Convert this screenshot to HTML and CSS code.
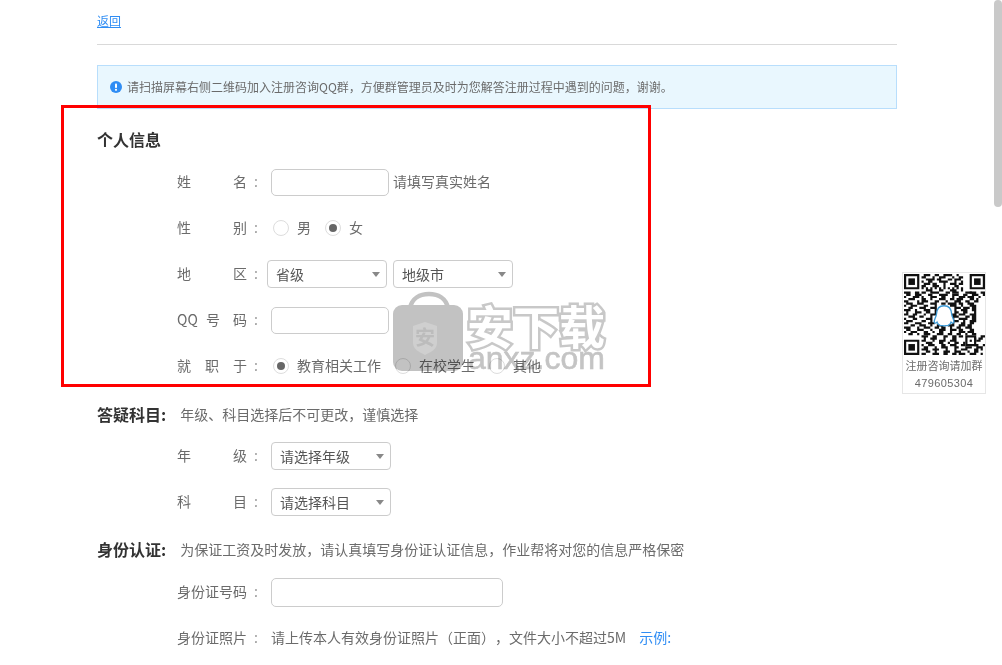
FILE: index.html
```html
<!DOCTYPE html>
<html lang="zh-CN">
<head>
<meta charset="utf-8">
<title>注册</title>
<link rel="stylesheet" href="styles.css">
</head>
<body>
<main class="page">
  <header class="top"><a class="back" href="#">返回</a></header>
  <div class="alert">
    <svg class="alert-icon" viewBox="0 0 12 12" width="12" height="12"><circle cx="6" cy="6" r="6" fill="#2f8df4"/><rect x="5" y="2.4" width="2" height="4.6" rx=".8" fill="#fff"/><circle cx="6" cy="8.8" r="1.1" fill="#fff"/></svg>
    <span>请扫描屏幕右侧二维码加入注册咨询QQ群，方便群管理员及时为您解答注册过程中遇到的问题，谢谢。</span>
  </div>

  <section>
    <h2 class="head head-first">个人信息</h2>
    <div class="rows">
      <div class="row"><span class="label">姓 名</span><span class="colon">:</span><input class="input" type="text"><span class="hint">请填写真实姓名</span></div>
      <div class="row row-short"><span class="label">性 别</span><span class="colon">:</span>
        <span class="radios"><span class="radio"></span><span class="opt">男</span><span class="radio on"></span><span class="opt">女</span></span></div>
      <div class="row row-tall"><span class="label">地 区</span><span class="colon">:</span>
        <span class="selects shift"><span class="select">省级</span><span class="select">地级市</span></span></div>
      <div class="row"><span class="label">QQ 号 码</span><span class="colon">:</span><input class="input" type="text"></div>
      <div class="row"><span class="label">就 职 于</span><span class="colon">:</span>
        <span class="radios"><span class="radio on"></span><span class="opt">教育相关工作</span><span class="radio"></span><span class="opt">在校学生</span><span class="radio"></span><span class="opt">其他</span></span></div>
    </div>
  </section>

  <section>
    <h2 class="head head-second">答疑科目:<small>年级、科目选择后不可更改，谨慎选择</small></h2>
    <div class="rows rows-second">
      <div class="row"><span class="label">年 级</span><span class="colon">:</span><span class="select">请选择年级</span></div>
      <div class="row"><span class="label">科 目</span><span class="colon">:</span><span class="select">请选择科目</span></div>
    </div>
  </section>

  <section>
    <h2 class="head head-third">身份认证:<small>为保证工资及时发放，请认真填写身份证认证信息，作业帮将对您的信息严格保密</small></h2>
    <div class="rows">
      <div class="row"><span class="label">身份证号码</span><span class="colon">:</span><input class="input input-wide" type="text"></div>
      <div class="row"><span class="label">身份证照片</span><span class="colon">:</span><span class="hint-line">请上传本人有效身份证照片（正面），文件大小不超过5M</span><a class="example" href="#">示例:</a></div>
    </div>
  </section>
</main>

<div class="redbox"></div>

<div class="watermark">
  <svg class="bag" viewBox="0 0 70 80" width="70" height="80">
    <path d="M17 17C19 7 27 3 36 3S53 7 55 17" fill="none" stroke="#c2c2c2" stroke-width="4.500"/>
    <rect x="0" y="14" width="70" height="66" rx="9" fill="#c2c2c2"/>
    <path d="M20 35L32 31 44 35V52C44 58 38 61 32 64 26 61 20 58 20 52Z" fill="#cfcfcf"/>
  </svg>
  <span class="bag-char">安</span>
  <span class="wm-cn">安下载</span>
  <span class="wm-en">anxz.com</span>
</div>

<aside class="qr">
  <svg class="qr-code" viewBox="0 0 37 37" width="81" height="81">
    <g fill="none" stroke="#111">
      <path d="M.5.5h6v6h-6zM30.500.5h6v6h-6zM.5 30.500h6v6h-6zM28.500 28.500h4v4h-4z"/>
      <path d="M9 .5h3m2 0h2m2 0h4m2 0h1M8 1.500h2m3 0h1m2 0h3m3 0h1m2 0h2M10 2.500h4m1 0h2m3 0h2m1 0h3M8 3.500h1m2 0h2m3 0h4m3 0h1m2 0h1M9 4.500h3m1 0h2m3 0h1m2 0h3m1 0h2M8 5.500h2m3 0h3m2 0h1m4 0h2M8 6.500h1m1 0h1m1 0h1m1 0h1m1 0h1m1 0h1m1 0h1m1 0h1m1 0h1m1 0h1M10 7.500h3m3 0h2m3 0h3m2 0h1M8 8.500h2m2 0h4m3 0h2m1 0h3m3 0h3"/>
      <path d="M0 8.500h3m2 0h2m23 0h3m2 0h2M1 9.500h2m2 0h3m3 0h2m3 0h4m2 0h3m2 0h2m2 0h3m2 0h2M0 10.500h1m3 0h3m1 0h1m3 0h3m2 0h2m3 0h1m2 0h3m1 0h3m2 0h1M2 11.500h3m3 0h2m2 0h1m3 0h3m2 0h2m1 0h3m3 0h2m1 0h1M0 12.500h2m4 0h1m1 0h3m3 0h2m3 0h1m3 0h3m2 0h2m2 0h2M1 13.500h3m2 0h3m3 0h3m2 0h2m1 0h4m1 0h2m2 0h3M0 14.500h1m2 0h3m3 0h2m3 0h1m6 0h3m2 0h1m3 0h3M2 15.500h2m3 0h3m2 0h3m8 0h3m1 0h3m1 0h2M0 16.500h3m2 0h1m3 0h3m2 0h1m8 0h1m2 0h3m2 0h2M1 17.500h1m3 0h3m2 0h2m2 0h1m8 0h2m2 0h2m3 0h1M0 18.500h2m2 0h2m3 0h1m2 0h3m7 0h2m1 0h3m2 0h3M2 19.500h3m2 0h2m3 0h1m2 0h1m6 0h3m3 0h2m1 0h2M0 20.500h1m3 0h2m4 0h3m2 0h2m5 0h1m2 0h4m2 0h2M1 21.500h3m4 0h2m2 0h1m2 0h3m4 0h3m2 0h1m2 0h3M0 22.500h2m3 0h3m3 0h3m3 0h2m3 0h1m3 0h2m2 0h2M3 23.500h2m2 0h3m2 0h1m2 0h3m2 0h3m2 0h3m1 0h2M0 24.500h3m3 0h1m2 0h3m2 0h2m1 0h2m2 0h1m2 0h2m2 0h3M1 25.500h2m3 0h3m3 0h1m3 0h3m2 0h3m1 0h2m3 0h2M0 26.500h1m2 0h3m3 0h2m2 0h1m2 0h2m3 0h1m3 0h3m1 0h3M2 27.500h2m2 0h1m2 0h3m3 0h3m2 0h2m2 0h2m2 0h1m2 0h2"/>
      <path d="M8 28.500h3m2 0h2m3 0h2m2 0h2m1 0h2m8 0h2M9 29.500h1m2 0h3m3 0h1m3 0h2m8 0h1m1 0h2M8 30.500h2m3 0h1m2 0h3m2 0h3m9 0h2M10 31.500h3m3 0h2m2 0h1m2 0h2m2 0h1m9 0h1M8 32.500h1m2 0h3m3 0h2m2 0h3m2 0h2m4 0h2m2 0h1M9 33.500h2m3 0h1m2 0h3m3 0h2m3 0h3m2 0h3M8 34.500h3m2 0h3m3 0h1m3 0h1m2 0h3m3 0h2m1 0h1M10 35.500h2m2 0h1m3 0h3m2 0h3m3 0h1m2 0h2M8 36.500h2m3 0h3m2 0h2m2 0h2m1 0h3m2 0h3m2 0h1"/>
    </g>
    <rect x="2" y="2" width="3" height="3" fill="#111"/><rect x="32" y="2" width="3" height="3" fill="#111"/><rect x="2" y="32" width="3" height="3" fill="#111"/><rect x="30" y="30" width="1" height="1" fill="#111"/>
    <path d="M18.300 14.500c2.400 0 3.400 1.800 3.500 4 .1 1 1 2.300 1 3.300 0 .8-.8.8-1.300.2-.3.800-1 1.300-1.400 1.500-1.200.3-2.300.3-3.600 0-.5-.2-1.100-.7-1.400-1.500-.5.600-1.300.6-1.300-.2 0-1 .9-2.300 1-3.300.1-2.200 1.100-4 3.500-4z" fill="#fff" stroke="#3c9ad6" stroke-width=".6"/>
  </svg>
  <p class="qr-text">注册咨询请加群</p>
  <p class="qr-text qr-num">479605304</p>
</aside>

<div class="scroll-thumb"></div>
</body>
</html>
```

FILE: styles.css
```css
* { box-sizing: border-box; }

html, body {
  margin: 0;
  height: 665px;
  overflow: hidden;
  background: #fff;
}

body {
  position: relative;
  font: 14px/20px "Noto Sans CJK SC", "Liberation Sans", sans-serif;
  color: #6b6b6b;
  text-spacing-trim: space-all;
}

a { color: #2f8df4; }

.page {
  width: 800px;
  margin-left: 97px;
}

.top {
  height: 45px;
  padding-top: 11px;
  border-bottom: 1px solid #d9d9d9;
  font-size: 12px;
}

.back { display: inline-block; line-height: 20px; }

.alert {
  display: flex;
  align-items: center;
  gap: 5px;
  height: 44px;
  margin-top: 20px;
  padding-left: 12px;
  background: #e9f7fe;
  border: 1px solid #b8defc;
  font-size: 12px;
}

.alert-icon { flex: none; }

.head {
  display: flex;
  align-items: center;
  height: 22px;
  margin: 0;
  padding-bottom: 2px;
  font-size: 16px;
  font-weight: 700;
  line-height: 20px;
  color: #333;
}

.head small {
  margin-left: 14px;
  font-size: 14px;
  font-weight: 400;
  color: #6b6b6b;
}

.head-first { margin-top: 20px; }
.head-second { margin-top: 15px; }
.head-third { margin-top: 14px; }

.rows { margin-top: 8px; }
.rows-second { margin-top: 7px; }

.row {
  display: flex;
  align-items: center;
  height: 46px;
  padding-left: 80px;
}

.row-short { height: 45px; }
.row-tall { height: 47px; }

.label,
.colon,
.hint,
.hint-line,
.opt,
.example { padding-bottom: 2px; }

.label {
  flex: none;
  width: 70px;
  text-align: justify;
  text-align-last: justify;
}

.colon {
  flex: none;
  width: 24px;
  padding-left: 7px;
  color: #999;
}

.input {
  width: 118px;
  height: 27px;
  margin-top: 1px;
  padding: 0 8px;
  background: #fff;
  border: 1px solid #ccc;
  border-radius: 5px;
  outline: none;
}

.input-wide { width: 232px; height: 29px; margin-top: 0; }

.hint { margin-left: 4px; }

.radios { display: flex; align-items: center; }

.radio {
  position: relative;
  flex: none;
  width: 16px;
  height: 16px;
  margin-left: 2px;
  background: #fff;
  border: 1px solid #ddd;
  border-radius: 50%;
}

.radio.on::after {
  content: "";
  position: absolute;
  top: 3px;
  left: 3px;
  width: 8px;
  height: 8px;
  background: #666;
  border-radius: 50%;
}

.opt { margin: 0 12px 0 8px; }

.selects { display: flex; gap: 6px; }
.shift { margin-left: -4px; }

.select {
  position: relative;
  display: block;
  flex: none;
  width: 120px;
  height: 28px;
  padding-left: 8px;
  border: 1px solid #ccc;
  border-radius: 4px;
  line-height: 27px;
  color: #555;
  background: #fff;
}

.select::after {
  content: "";
  position: absolute;
  top: 11px;
  right: 6px;
  border-style: solid;
  border-width: 5px 4px 0;
  border-color: #888 transparent transparent;
}

.example { margin-left: 13px; text-decoration: none; }

.redbox {
  position: absolute;
  top: 105px;
  left: 61px;
  width: 590px;
  height: 282px;
  border: 3px solid #f00;
}

.watermark {
  position: absolute;
  top: 291px;
  left: 393px;
  width: 215px;
  height: 85px;
  mix-blend-mode: multiply;
  pointer-events: none;
}

.bag { position: absolute; top: 0; left: 0; }

.bag-char {
  position: absolute;
  top: 36px;
  left: 22px;
  font-size: 20px;
  line-height: 20px;
  font-weight: 700;
  color: #bcbcbc;
}

.wm-cn {
  position: absolute;
  top: 8px;
  left: 74px;
  font-size: 46px;
  line-height: 50px;
  font-weight: 700;
  color: #fff;
  -webkit-text-stroke: 5px #c8c8c8;
  paint-order: stroke fill;
  white-space: nowrap;
}

.wm-en {
  position: absolute;
  top: 49px;
  left: 75px;
  font-family: "Liberation Sans", sans-serif;
  font-size: 32px;
  line-height: 36px;
  color: #c4c4c4;
  -webkit-text-stroke: .6px #c4c4c4;
  white-space: nowrap;
}

.qr {
  position: absolute;
  top: 272px;
  left: 902px;
  width: 84px;
  height: 122px;
  padding-top: 1px;
  background: #fff;
  border: 1px solid #e6e6e6;
  text-align: center;
}

.qr-code { display: block; margin: 0 auto 1px; }

.qr-text {
  margin: 0;
  font-size: 11px;
  line-height: 18px;
  white-space: nowrap;
}

.qr-num { letter-spacing: .4px; font-family: "Liberation Sans", sans-serif; }

.scroll-thumb {
  position: absolute;
  top: 0;
  left: 994px;
  width: 8px;
  height: 207px;
  background: #c9c9c9;
  border-radius: 4px;
}
```
